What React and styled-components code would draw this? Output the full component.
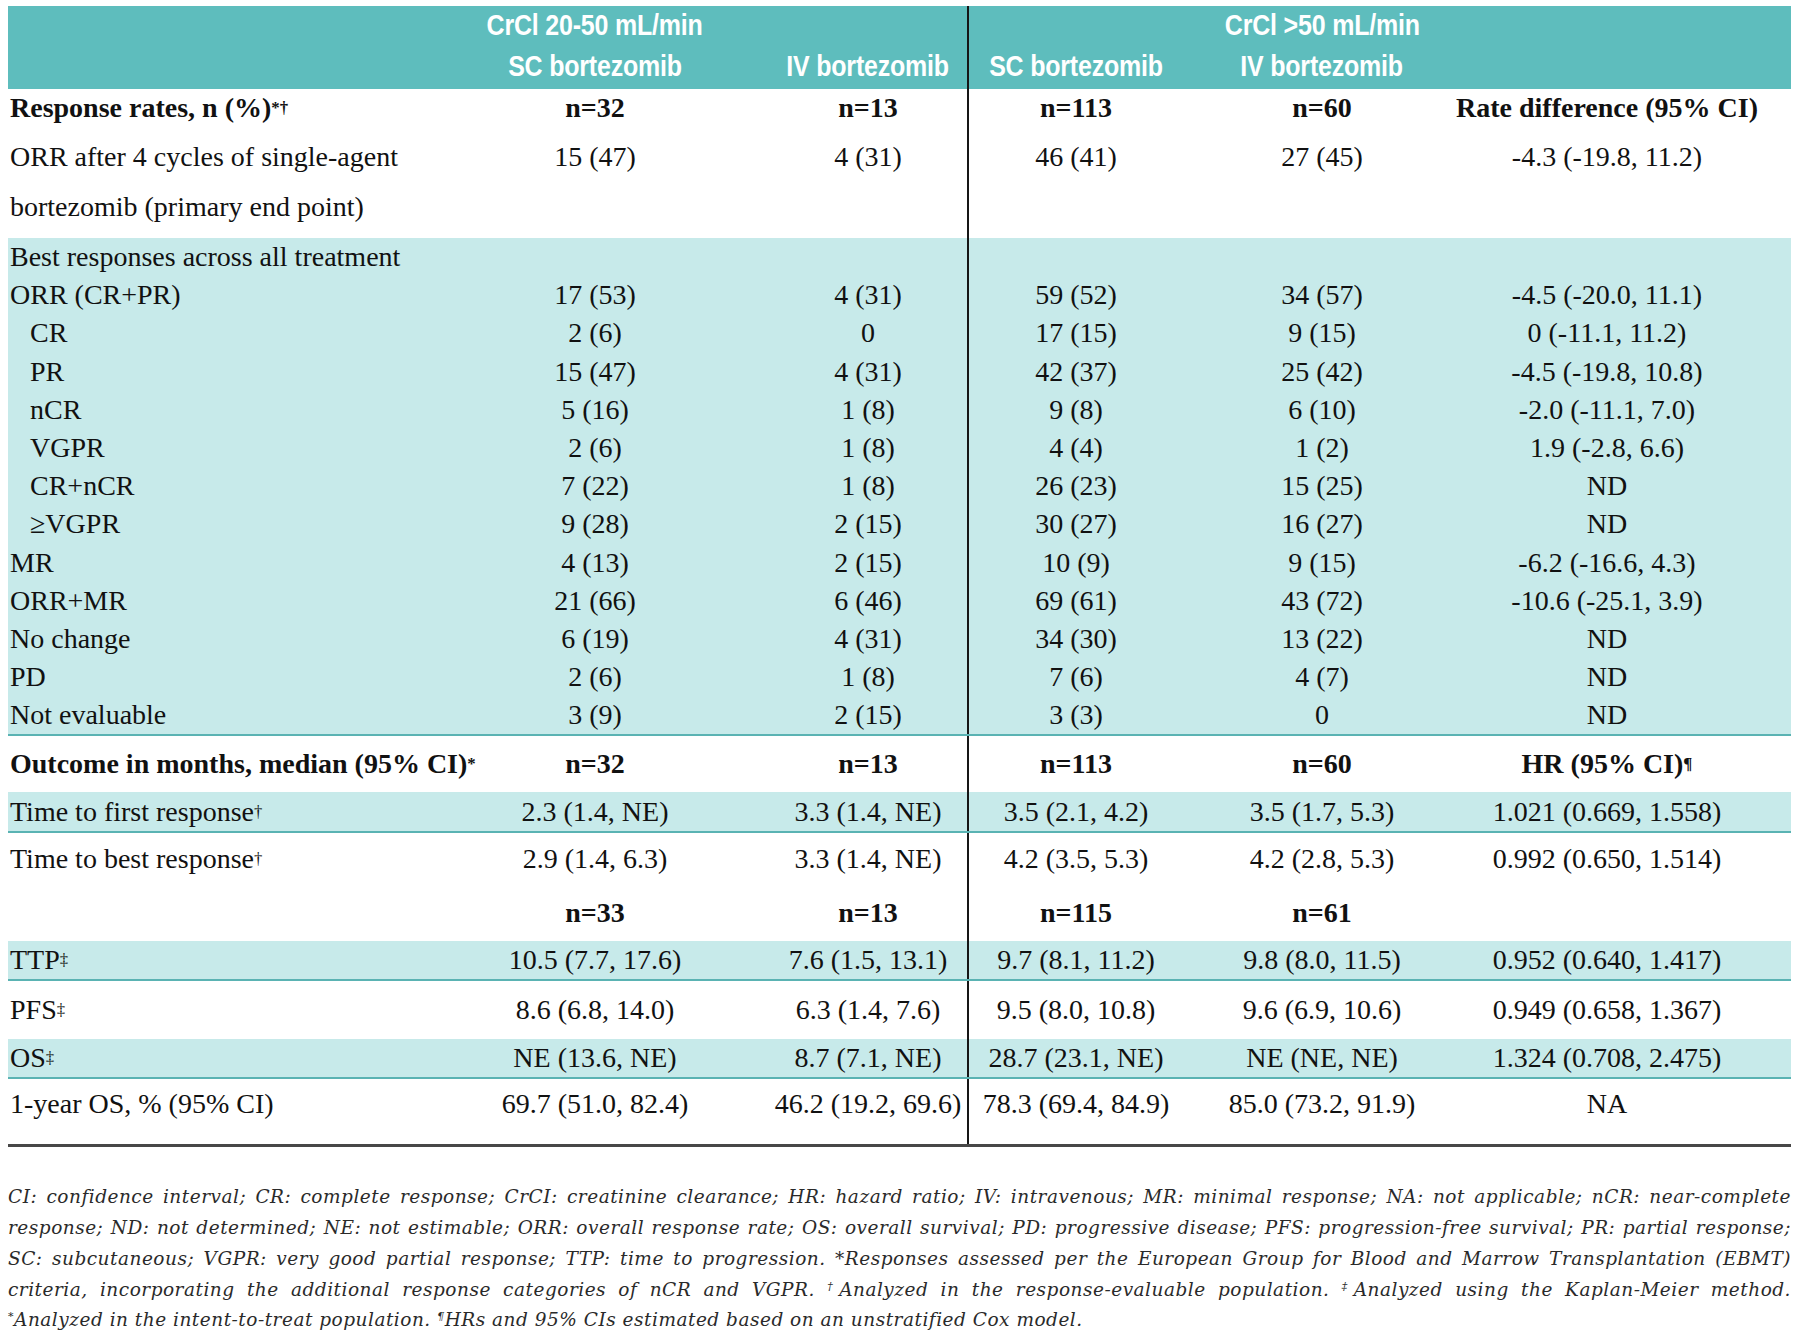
import React from 'react';
import styled, { createGlobalStyle } from 'styled-components';

const GlobalStyle = createGlobalStyle`
  html, body {
    margin: 0;
    background: #fff;
  }
`;

const COLS = '451px 272px 236px 216px 278px 330px';

const Page = styled.div`
  width: 1783px;
  padding: 6px 9px 20px 8px;
  font-family: "Liberation Serif", "Times New Roman", serif;
  color: #111;
`;

const Header = styled.div`
  background: #5ebdbd;
  color: #fff;
`;

const Row = styled.div`
  display: grid;
  grid-template-columns: ${COLS};
  height: ${(p) => p.$h}px;
  font-size: 28px;
  line-height: ${(p) => (p.$top ? '50px' : '1')};
`;

const Band = styled.div`
  background: #c7eaea;
  border-bottom: 2px solid #5ab3b3;
`;

const Cell = styled.div`
  display: flex;
  align-items: ${(p) => (p.$top ? 'flex-start' : 'center')};
  justify-content: ${(p) => (p.$col === 0 ? 'flex-start' : 'center')};
  padding-top: ${(p) => (p.$top ? p.$top : 0)}px;
  padding-left: ${(p) => (p.$col === 0 ? (p.$indent ? 22 : 2) : p.$col === 2 ? 38 : 0)}px;
  padding-right: ${(p) => (p.$col === 5 ? 38 : 0)}px;
  border-left: ${(p) => (p.$col === 3 ? '2px solid #161616' : 'none')};
  white-space: nowrap;
  font-weight: ${(p) => (p.$bold ? 700 : 400)};
`;

const HeadCell = styled(Cell)`
  font-family: "Liberation Sans Narrow", "Liberation Sans", Arial, sans-serif;
  font-weight: 700;
  font-size: 29px;
  color: #fff;
`;

// no narrow face installed: squeeze the bold sans to the condensed look
const HeadText = styled.span`
  display: inline-block;
  transform: scaleX(0.86);
  letter-spacing: -0.2px;
`;

const Sup = styled.span`
  font-size: 0.6em;
  vertical-align: 0.55em;
  line-height: 0;
`;

const Rule = styled.div`
  height: 3px;
  background: #474747;
`;

const Notes = styled.div`
  margin-top: 35px;
  font-family: "DejaVu Serif", "Liberation Serif", serif;
  font-style: italic;
  font-size: 18.5px;
  letter-spacing: 0.5px;
  line-height: 30.7px;
  color: #2a2a2a;
`;

const NoteLine = styled.div`
  text-align: ${(p) => (p.$last ? 'left' : 'justify')};
  text-align-last: ${(p) => (p.$last ? 'left' : 'justify')};
`;

const TableRow = ({ cells, h, bold, top, indent }) => (
  <Row $h={h} $top={top}>
    {cells.map((c, i) => (
      <Cell key={i} $col={i} $bold={bold} $top={top} $indent={i === 0 && indent}>
        {c}
      </Cell>
    ))}
  </Row>
);

const HeadRow = ({ cells, h }) => (
  <Row $h={h}>
    {cells.map((c, i) => (
      <HeadCell key={i} $col={i}>
        {c && <HeadText>{c}</HeadText>}
      </HeadCell>
    ))}
  </Row>
);

const band = [
  [['Best responses across all treatment', '', '', '', '', '']],
  [['ORR (CR+PR)', '17 (53)', '4 (31)', '59 (52)', '34 (57)', '-4.5 (-20.0, 11.1)']],
  [['CR', '2 (6)', '0', '17 (15)', '9 (15)', '0 (-11.1, 11.2)'], true],
  [['PR', '15 (47)', '4 (31)', '42 (37)', '25 (42)', '-4.5 (-19.8, 10.8)'], true],
  [['nCR', '5 (16)', '1 (8)', '9 (8)', '6 (10)', '-2.0 (-11.1, 7.0)'], true],
  [['VGPR', '2 (6)', '1 (8)', '4 (4)', '1 (2)', '1.9 (-2.8, 6.6)'], true],
  [['CR+nCR', '7 (22)', '1 (8)', '26 (23)', '15 (25)', 'ND'], true],
  [['≥VGPR', '9 (28)', '2 (15)', '30 (27)', '16 (27)', 'ND'], true],
  [['MR', '4 (13)', '2 (15)', '10 (9)', '9 (15)', '-6.2 (-16.6, 4.3)']],
  [['ORR+MR', '21 (66)', '6 (46)', '69 (61)', '43 (72)', '-10.6 (-25.1, 3.9)']],
  [['No change', '6 (19)', '4 (31)', '34 (30)', '13 (22)', 'ND']],
  [['PD', '2 (6)', '1 (8)', '7 (6)', '4 (7)', 'ND']],
  [['Not evaluable', '3 (9)', '2 (15)', '3 (3)', '0', 'ND']],
];

export default function App() {
  return (
    <Page>
      <GlobalStyle />
      <Header>
        <HeadRow h={38} cells={['', 'CrCl 20-50 mL/min', '', '', 'CrCl >50 mL/min', '']} />
        <HeadRow
          h={45}
          cells={['', 'SC bortezomib', 'IV bortezomib', 'SC bortezomib', 'IV bortezomib', '']}
        />
      </Header>

      <TableRow
        h={38}
        bold
        cells={[
          <>Response rates, n (%)<Sup>*†</Sup></>,
          'n=32', 'n=13', 'n=113', 'n=60', 'Rate difference (95% CI)',
        ]}
      />
      <TableRow
        h={111}
        top={5}
        cells={[
          <>ORR after 4 cycles of single-agent<br />bortezomib (primary end point)</>,
          '15 (47)', '4 (31)', '46 (41)', '27 (45)', '-4.3 (-19.8, 11.2)',
        ]}
      />

      <Band>
        {band.map(([cells, indent], i) => (
          <TableRow key={i} h={38.2} cells={cells} indent={indent} />
        ))}
      </Band>

      <TableRow
        h={56}
        bold
        cells={[
          <>Outcome in months, median (95% CI)<Sup>*</Sup></>,
          'n=32', 'n=13', 'n=113', 'n=60', <>HR (95% CI)<Sup>¶</Sup></>,
        ]}
      />
      <Band>
        <TableRow
          h={39}
          cells={[
            <>Time to first response<Sup>†</Sup></>,
            '2.3 (1.4, NE)', '3.3 (1.4, NE)', '3.5 (2.1, 4.2)', '3.5 (1.7, 5.3)', '1.021 (0.669, 1.558)',
          ]}
        />
      </Band>
      <TableRow
        h={52}
        cells={[
          <>Time to best response<Sup>†</Sup></>,
          '2.9 (1.4, 6.3)', '3.3 (1.4, NE)', '4.2 (3.5, 5.3)', '4.2 (2.8, 5.3)', '0.992 (0.650, 1.514)',
        ]}
      />
      <TableRow h={56} bold cells={['', 'n=33', 'n=13', 'n=115', 'n=61', '']} />
      <Band>
        <TableRow
          h={38}
          cells={[
            <>TTP<Sup>‡</Sup></>,
            '10.5 (7.7, 17.6)', '7.6 (1.5, 13.1)', '9.7 (8.1, 11.2)', '9.8 (8.0, 11.5)', '0.952 (0.640, 1.417)',
          ]}
        />
      </Band>
      <TableRow
        h={58}
        cells={[
          <>PFS<Sup>‡</Sup></>,
          '8.6 (6.8, 14.0)', '6.3 (1.4, 7.6)', '9.5 (8.0, 10.8)', '9.6 (6.9, 10.6)', '0.949 (0.658, 1.367)',
        ]}
      />
      <Band>
        <TableRow
          h={38}
          cells={[
            <>OS<Sup>‡</Sup></>,
            'NE (13.6, NE)', '8.7 (7.1, NE)', '28.7 (23.1, NE)', 'NE (NE, NE)', '1.324 (0.708, 2.475)',
          ]}
        />
      </Band>
      <TableRow
        h={65}
        top={0.01}
        cells={[
          '1-year OS, % (95% CI)',
          '69.7 (51.0, 82.4)', '46.2 (19.2, 69.6)', '78.3 (69.4, 84.9)', '85.0 (73.2, 91.9)', 'NA',
        ]}
      />
      <Rule />

      <Notes>
        <NoteLine>
          CI: confidence interval; CR: complete response; CrCI: creatinine clearance; HR: hazard ratio; IV: intravenous; MR: minimal response; NA: not applicable; nCR: near-complete
        </NoteLine>
        <NoteLine>
          response; ND: not determined; NE: not estimable; ORR: overall response rate; OS: overall survival; PD: progressive disease; PFS: progression-free survival; PR: partial response;
        </NoteLine>
        <NoteLine>
          SC: subcutaneous; VGPR: very good partial response; TTP: time to progression. *Responses assessed per the European Group for Blood and Marrow Transplantation (EBMT)
        </NoteLine>
        <NoteLine>
          criteria, incorporating the additional response categories of nCR and VGPR. <Sup>†</Sup>Analyzed in the response-evaluable population. <Sup>‡</Sup>Analyzed using the Kaplan-Meier method.
        </NoteLine>
        <NoteLine $last>
          <Sup>*</Sup>Analyzed in the intent-to-treat population. <Sup>¶</Sup>HRs and 95% CIs estimated based on an unstratified Cox model.
        </NoteLine>
      </Notes>
    </Page>
  );
}
